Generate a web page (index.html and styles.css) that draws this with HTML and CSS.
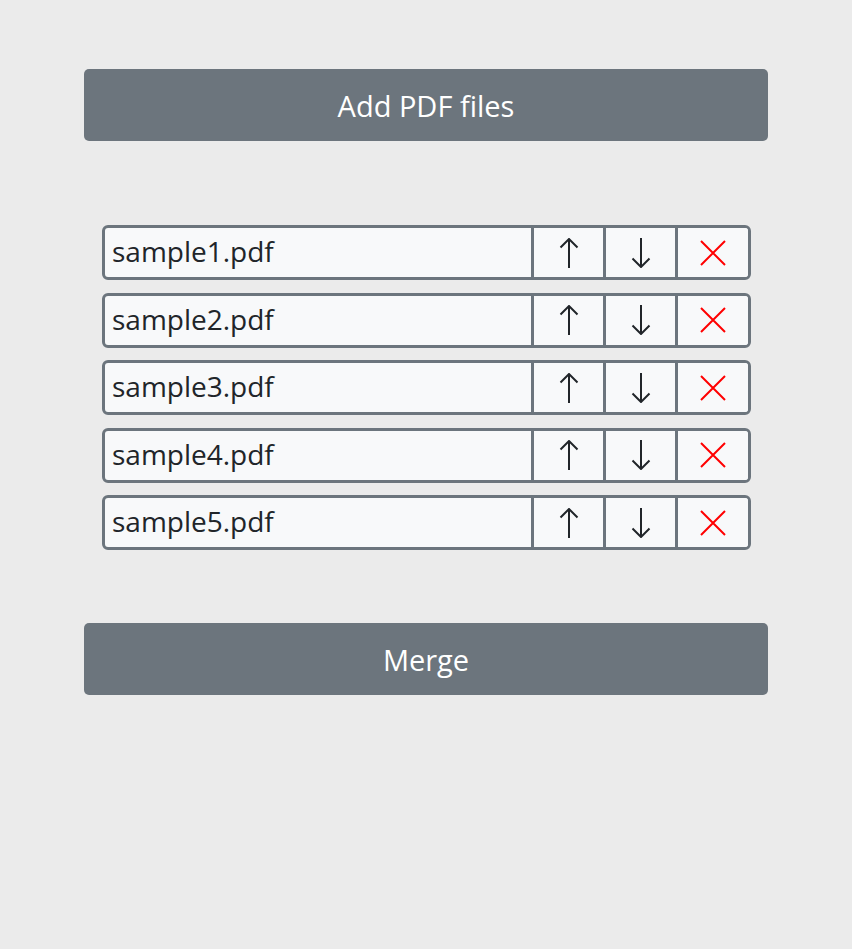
FILE: index.html
```html
<!DOCTYPE html>
<html lang="en">
<head>
<meta charset="utf-8">
<title>PDF Merge</title>
<link rel="stylesheet" href="styles.css">
</head>
<body>
<main class="page">
  <button class="btn-main add-btn">Add PDF files</button>
  <ul class="file-list">
    <li class="file-row"><span class="file-name">sample1.pdf</span><button class="cell-btn"><svg viewBox="0 0 20 30" width="20" height="30"><path d="M10 1V30M1.5 9.5L10 1l8.5 8.5"/></svg></button><button class="cell-btn"><svg viewBox="0 0 20 30" width="20" height="30"><path d="M10 0V29M1.5 20.5L10 29l8.5-8.5"/></svg></button><button class="cell-btn del"><svg viewBox="0 0 26 26" width="26" height="26"><path d="M1 1L25 25M25 1L1 25"/></svg></button></li>
    <li class="file-row"><span class="file-name">sample2.pdf</span><button class="cell-btn"><svg viewBox="0 0 20 30" width="20" height="30"><path d="M10 1V30M1.5 9.5L10 1l8.5 8.5"/></svg></button><button class="cell-btn"><svg viewBox="0 0 20 30" width="20" height="30"><path d="M10 0V29M1.5 20.5L10 29l8.5-8.5"/></svg></button><button class="cell-btn del"><svg viewBox="0 0 26 26" width="26" height="26"><path d="M1 1L25 25M25 1L1 25"/></svg></button></li>
    <li class="file-row"><span class="file-name">sample3.pdf</span><button class="cell-btn"><svg viewBox="0 0 20 30" width="20" height="30"><path d="M10 1V30M1.5 9.5L10 1l8.5 8.5"/></svg></button><button class="cell-btn"><svg viewBox="0 0 20 30" width="20" height="30"><path d="M10 0V29M1.5 20.5L10 29l8.5-8.5"/></svg></button><button class="cell-btn del"><svg viewBox="0 0 26 26" width="26" height="26"><path d="M1 1L25 25M25 1L1 25"/></svg></button></li>
    <li class="file-row"><span class="file-name">sample4.pdf</span><button class="cell-btn"><svg viewBox="0 0 20 30" width="20" height="30"><path d="M10 1V30M1.5 9.5L10 1l8.5 8.5"/></svg></button><button class="cell-btn"><svg viewBox="0 0 20 30" width="20" height="30"><path d="M10 0V29M1.5 20.5L10 29l8.5-8.5"/></svg></button><button class="cell-btn del"><svg viewBox="0 0 26 26" width="26" height="26"><path d="M1 1L25 25M25 1L1 25"/></svg></button></li>
    <li class="file-row"><span class="file-name">sample5.pdf</span><button class="cell-btn"><svg viewBox="0 0 20 30" width="20" height="30"><path d="M10 1V30M1.5 9.5L10 1l8.5 8.5"/></svg></button><button class="cell-btn"><svg viewBox="0 0 20 30" width="20" height="30"><path d="M10 0V29M1.5 20.5L10 29l8.5-8.5"/></svg></button><button class="cell-btn del"><svg viewBox="0 0 26 26" width="26" height="26"><path d="M1 1L25 25M25 1L1 25"/></svg></button></li>
  </ul>
  <button class="btn-main merge-btn">Merge</button>
</main>
</body>
</html>
```

FILE: styles.css
```css
* { box-sizing: border-box; }
html, body {
  margin: 0;
  padding: 0;
  background: #ebebeb;
  font-family: "Open Sans", "Noto Sans", sans-serif;
  color: #212529;
}
.page {
  width: 684px;
  margin: 0 auto;
  padding-top: 69px;
  display: flex;
  flex-direction: column;
  align-items: center;
}
.btn-main {
  width: 684px;
  height: 72px;
  border: none;
  border-radius: 5px;
  background: #6c757d;
  color: #ffffff;
  font-family: inherit;
  font-size: 29px;
  padding: 0;
  cursor: pointer;
}
.file-list {
  list-style: none;
  margin: 84px 0 73px;
  padding: 0 0 0 1px;
  width: 650px;
  display: flex;
  flex-direction: column;
  gap: 12.5px;
}
.file-row {
  display: flex;
  height: 55px;
  border: 3px solid #6c757d;
  border-radius: 6px;
  background: #f8f9fa;
  overflow: hidden;
}
.file-name {
  flex: 1;
  display: flex;
  align-items: center;
  padding: 0 0 3px 7px;
  font-size: 28px;
  color: #212529;
}
.cell-btn {
  width: 72px;
  flex: none;
  border: none;
  border-left: 3px solid #6c757d;
  background: #f8f9fa;
  padding: 0;
  display: flex;
  align-items: center;
  justify-content: center;
}
.cell-btn svg {
  fill: none;
  stroke: #212529;
  stroke-width: 2;
}
.cell-btn.del svg {
  stroke: #ff0000;
}
.cell-btn.del { width: 73px; }
```
